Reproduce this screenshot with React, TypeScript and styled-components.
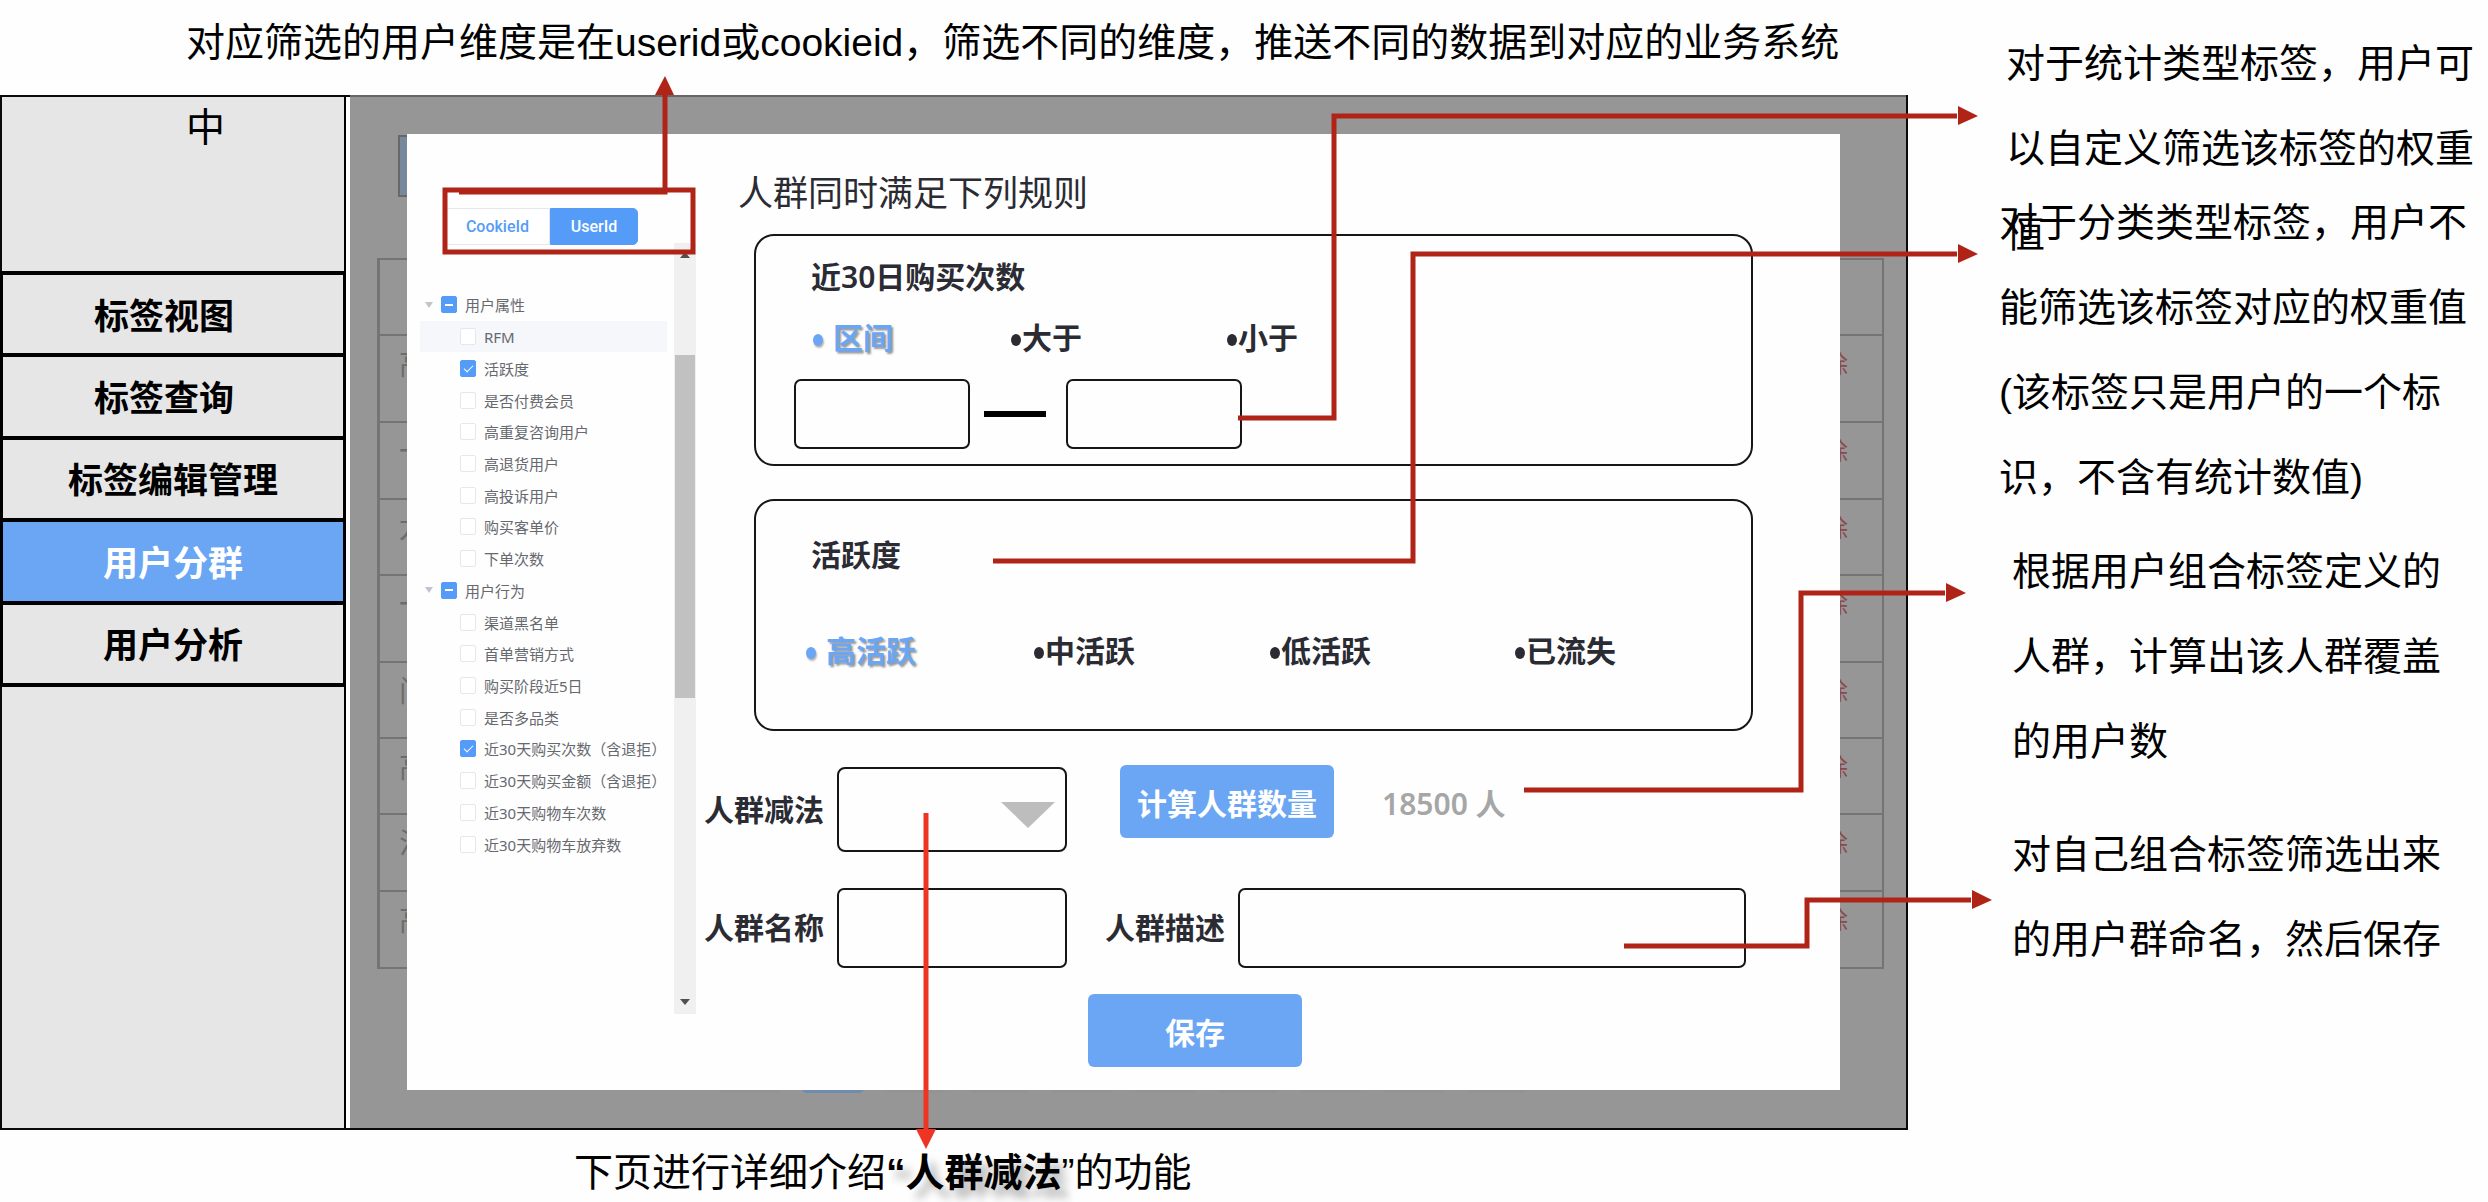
import React, { useState } from "react";
import styled, { createGlobalStyle } from "styled-components";

const noteFont = `"Liberation Sans", "Noto Sans CJK SC", sans-serif`;
const uiFont = `"Noto Sans", "Noto Sans CJK SC", sans-serif`;
const blue = "#6aa6f3";
const treeBlue = "#559cf8";
const ink = "#2b2b33";

const GlobalStyle = createGlobalStyle`
  *, *::before, *::after { box-sizing: border-box; }
  body { margin: 0; background: #fefefe; font-family: ${uiFont}; color: ${ink}; }
  button, input, select { font: inherit; color: inherit; }
`;

/* ---------- page ---------- */

const Page = styled.div`
  position: relative;
  display: grid;
  grid-template-columns: minmax(0, 1fr) 580px;
  overflow: hidden;
`;

const Main = styled.main`
  display: flex;
  flex-direction: column;
`;

const TopCaption = styled.p`
  position: relative;
  z-index: 1;
  height: 95px;
  margin: 0;
  padding: 0 40px 0 186px;
  font: 39px/85px ${noteFont};
  color: #000;
`;

const BottomCaption = styled.p`
  height: 72px;
  margin: 0;
  padding: 5px 0 0 574px;
  font: 39px/75px ${noteFont};
  color: #000;

  strong {
    text-shadow: 8px 9px 8px rgba(0, 0, 0, 0.3);
  }
`;

const Frame = styled.div`
  display: grid;
  grid-template-columns: 344px minmax(0, 1fr);
  gap: 4px;
  border: 2px solid #0a0a0a;
  background: #fff;
`;

/* ---------- sidebar ---------- */

const Sidebar = styled.nav`
  padding-top: 174px;
  background: #e6e6e6;
  border-right: 2px solid #000;
`;

const Menu = styled.ul`
  display: grid;
  grid-auto-rows: 1fr;
  gap: 4px;
  height: 416px;
  margin: 0 -2px;
  padding: 4px 3px;
  list-style: none;
  background: #000;
`;

const MenuLink = styled.a<{ $active?: boolean; $short?: boolean }>`
  display: flex;
  align-items: center;
  justify-content: center;
  height: 100%;
  padding: 0 ${(p) => (p.$short ? 18 : 0)}px 2px 0;
  background: ${(p) => (p.$active ? blue : "#e6e6e6")};
  color: ${(p) => (p.$active ? "#fff" : "#000")};
  font-size: 35px;
  font-weight: 600;
  text-decoration: none;
`;

/* ---------- dimmed page behind the dialog ---------- */

const Stage = styled.div`
  display: grid;
  margin-top: -2px;
  border-top: 2px solid #666;
  background: #969696;
`;

const Backdrop = styled.div`
  grid-area: 1 / 1;
  display: flex;
  flex-direction: column;
  padding: 38px 22px 0 27px;
`;

const BackButton = styled.div`
  width: 120px;
  height: 62px;
  margin: 0 0 61px 21px;
  border: 2px solid #686868;
  background: #76899c;
`;

const BackTable = styled.table`
  width: 100%;
  border-collapse: collapse;
  color: #6c6c6c;

  td {
    border: 2px solid #747474;
    border-left-width: 3px;
    padding: 8px 34px 0 19px;
    vertical-align: top;
    font-size: 29px;
    line-height: 40px;
  }
  td:last-child {
    border-left: 0;
    text-align: right;
    color: #8c4848;
    font-size: 24px;
  }
`;

const BackRow = styled.tr<{ $height: number }>`
  height: ${(p) => p.$height}px;
`;

const Pager = styled.div`
  display: flex;
  gap: 21px;
  margin: 88px 0 0 342px;
`;

const PagerItem = styled.span<{ $on?: boolean }>`
  width: 62px;
  height: 36px;
  border-radius: 5px;
  background: ${(p) => (p.$on ? "#6f8bad" : "#939393")};
`;

/* ---------- dialog ---------- */

const Dialog = styled.section`
  grid-area: 1 / 1;
  z-index: 1;
  display: grid;
  grid-template-columns: 289px minmax(0, 1fr);
  margin: 37px 66px 38px 57px;
  background: #fefefe;
`;

const TreePanel = styled.aside`
  display: grid;
  grid-template-columns: 267px 22px;
  padding-top: 74px;
`;

const Segmented = styled.div`
  display: flex;
  margin: 0 0 44px 38px;
`;

const Segment = styled.button<{ $on?: boolean }>`
  width: ${(p) => (p.$on ? 88 : 105)}px;
  height: 37px;
  padding: 0;
  border: 1px solid ${(p) => (p.$on ? treeBlue : "#e4e7ed")};
  border-radius: ${(p) => (p.$on ? "0 5px 5px 0" : "5px 0 0 5px")};
  background: ${(p) => (p.$on ? treeBlue : "#fff")};
  color: ${(p) => (p.$on ? "#fff" : treeBlue)};
  font-family: Roboto, sans-serif;
  font-size: 16px;
  font-weight: 500;
`;

const Tree = styled.ul`
  display: grid;
  grid-auto-rows: 1fr;
  height: 571px;
  margin: 0 0 0 13px;
  padding: 0;
  list-style: none;
`;

const TreeRow = styled.label<{ $group?: boolean; $hover?: boolean }>`
  display: flex;
  align-items: center;
  gap: 8px;
  width: 247px;
  height: 100%;
  padding-left: ${(p) => (p.$group ? 5 : 40)}px;
  background: ${(p) => (p.$hover ? "#f5f7fb" : "transparent")};
  color: #66696e;
  font-size: 15px;
  white-space: nowrap;
`;

const Caret = styled.svg`
  width: 8px;
  height: 8px;
  fill: #c0c4cc;
`;

const Tick = styled.input<{ $partial?: boolean }>`
  display: grid;
  place-items: center;
  flex: none;
  appearance: none;
  width: 16px;
  height: 17px;
  margin: 0;
  border: 1px solid #e4e7ed;
  border-radius: 2px;
  background: #fff;

  &:checked {
    border-color: ${treeBlue};
    background: ${treeBlue};
  }
  &:checked::after {
    content: "";
    ${(p) =>
      p.$partial
        ? "width: 8px; height: 2px; background: #fff;"
        : "width: 5px; height: 9px; margin-top: -2px; border: solid #fff; border-width: 0 1px 1px 0; transform: rotate(45deg);"}
  }
`;

const ScrollTrack = styled.div`
  display: flex;
  flex-direction: column;
  align-items: center;
  height: 771px;
  margin-top: 35px;
  padding: 8px 0;
  background: #f0f0f0;
`;

const ScrollThumb = styled.div`
  width: 20px;
  height: 343px;
  margin: 96px 0 auto;
  background: #c1c1c1;
`;

const ScrollArrow = styled.svg`
  width: 10px;
  height: 8px;
  fill: #505050;
`;

const Form = styled.form`
  padding: 34px 0 23px 8px;
`;

const Title = styled.h1`
  margin: 0 0 16px 34px;
  font-size: 35px;
  font-weight: 400;
  line-height: 50px;
`;

const Card = styled.fieldset<{ $roomy?: boolean }>`
  min-width: 0;
  height: 232px;
  margin: 0 87px 33px 50px;
  padding: ${(p) => (p.$roomy ? 32 : 19)}px 38px 0;
  border: 2px solid #161616;
  border-radius: 20px;
`;

const CardTitle = styled.h2`
  margin: 0;
  padding-left: 17px;
  font-size: 30px;
  font-weight: 600;
  line-height: 44px;
`;

const Options = styled.div<{ $columns: string; $roomy?: boolean }>`
  display: grid;
  grid-template-columns: ${(p) => p.$columns};
  margin-top: ${(p) => (p.$roomy ? 54 : 19)}px;
  padding-left: ${(p) => (p.$roomy ? 12 : 19)}px;
`;

const Option = styled.label<{ $on?: boolean }>`
  display: flex;
  align-items: center;
  gap: ${(p) => (p.$on ? 10 : 1)}px;
  color: ${(p) => (p.$on ? blue : ink)};
  font-size: 30px;
  font-weight: 600;
  line-height: 40px;
  text-shadow: ${(p) => (p.$on ? "2px 2px 2px rgba(0, 0, 0, 0.4)" : "none")};
`;

const Dot = styled.input`
  appearance: none;
  width: 10px;
  height: 12px;
  margin: 4px 0 0;
  border-radius: 50%;
  background: ${ink};

  &:checked {
    background: ${blue};
    box-shadow: 1px 2px 2px rgba(0, 0, 0, 0.3);
  }
`;

const Range = styled.div`
  display: flex;
  align-items: center;
  gap: 14px;
  margin-top: 21px;
`;

const Dash = styled.span`
  width: 62px;
  height: 6px;
  margin-right: 6px;
  background: #000;
`;

const TextBox = styled.input<{ $size: "range" | "name" | "wide" }>`
  flex: ${(p) => (p.$size === "wide" ? "1" : "none")};
  width: ${(p) => (p.$size === "range" ? 176 : 230)}px;
  height: ${(p) => (p.$size === "range" ? 70 : 80)}px;
  padding: 0 12px;
  border: 2px solid #161616;
  border-radius: 7px;
  background: #fefefe;
  font-size: 30px;
`;

const Row = styled.div`
  display: flex;
  align-items: center;
  margin: 36px 94px 0 0;
`;

const FieldLabel = styled.label`
  margin-right: 13px;
  padding-bottom: 4px;
  font-size: 30px;
  font-weight: 600;
  white-space: nowrap;

  input + & {
    margin-left: 38px;
  }
`;

const SelectWrap = styled.span`
  position: relative;
  display: flex;
  width: 230px;
  height: 85px;
`;

const Select = styled.select`
  appearance: none;
  width: 100%;
  padding: 0 70px 0 12px;
  border: 2px solid #161616;
  border-radius: 8px;
  background: #fefefe;
  font-size: 30px;
`;

const SelectArrow = styled.svg`
  position: absolute;
  right: 12px;
  top: 35px;
  width: 54px;
  height: 26px;
  fill: #bdbdbd;
  pointer-events: none;
`;

const CountGroup = styled.div`
  display: flex;
  align-items: center;
  align-self: flex-start;
  gap: 48px;
  margin: -2px 0 0 53px;
`;

const Primary = styled.button`
  width: 214px;
  height: 73px;
  padding: 0;
  border: 0;
  border-radius: 6px;
  background: ${blue};
  color: #fff;
  font-size: 30px;
  font-weight: 600;
`;

const Count = styled.output`
  color: #a6a6a6;
  font-size: 30px;
  font-weight: 600;
`;

const SaveRow = styled.div`
  display: flex;
  margin: 26px 0 0 384px;
`;

/* ---------- notes ---------- */

const Notes = styled.aside`
  display: flex;
  flex-direction: column;
  padding: 21px 0 0 91px;
`;

const Note = styled.p<{ $width: number; $before?: number; $indent?: number }>`
  width: ${(p) => p.$width}px;
  margin: ${(p) => p.$before ?? 0}px 0 0 ${(p) => p.$indent ?? 0}px;
  font: 39px/85px ${noteFont};
  color: #000;
`;

const Arrows = styled.svg`
  position: absolute;
  inset: 0;
  z-index: 2;
  width: 100%;
  height: 100%;
  pointer-events: none;
`;

/* ---------- data ---------- */

const menu = [
  { label: "标签视图", short: true },
  { label: "标签查询", short: true },
  { label: "标签编辑管理" },
  { label: "用户分群", active: true },
  { label: "用户分析" },
];

const backRows = [
  { text: "", height: 76 },
  { text: "高", height: 87 },
  { text: "一", height: 77 },
  { text: "龙", height: 76 },
  { text: "一", height: 87 },
  { text: "问", height: 76 },
  { text: "高", height: 76 },
  { text: "沙", height: 77 },
  { text: "高", height: 77 },
];

const tree = [
  { label: "用户属性", group: true, on: true },
  { label: "RFM", hover: true },
  { label: "活跃度", on: true },
  { label: "是否付费会员" },
  { label: "高重复咨询用户" },
  { label: "高退货用户" },
  { label: "高投诉用户" },
  { label: "购买客单价" },
  { label: "下单次数" },
  { label: "用户行为", group: true, on: true },
  { label: "渠道黑名单" },
  { label: "首单营销方式" },
  { label: "购买阶段近5日" },
  { label: "是否多品类" },
  { label: "近30天购买次数（含退拒）", on: true },
  { label: "近30天购买金额（含退拒）" },
  { label: "近30天购物车次数" },
  { label: "近30天购物车放弃数" },
];

const arrows = [
  { line: "M459 192H665V95", head: "M655 95L665 76L674 95Z" },
  { line: "M1238 418H1334V116H1957", head: "M1958 106L1978 116L1958 125Z" },
  { line: "M993 561H1413V254H1957", head: "M1958 244L1978 254L1958 263Z" },
  { line: "M1524 790H1801V593H1945", head: "M1946 583L1966 593L1946 602Z" },
  { line: "M1624 946H1807V900H1971", head: "M1972 890L1992 900L1972 909Z" },
  { line: "M926 813V1129", head: "M916 1129H936L926 1149Z", bright: true },
];

function RadioSet({ name, items, columns, roomy }: { name: string; items: string[]; columns: string; roomy?: boolean }) {
  const [value, setValue] = useState(items[0]);
  return (
    <Options $columns={columns} $roomy={roomy}>
      {items.map((item) => (
        <Option key={item} $on={item === value}>
          <Dot type="radio" name={name} checked={item === value} onChange={() => setValue(item)} />
          {item}
        </Option>
      ))}
    </Options>
  );
}

export default function App() {
  return (
    <>
      <GlobalStyle />
      <Page>
        <Main>
          <TopCaption>
            对应筛选的用户维度是在userid或cookieid，筛选不同的维度，推送不同的数据到对应的业务系统中
          </TopCaption>
          <Frame>
            <Sidebar>
              <Menu>
                {menu.map((m) => (
                  <li key={m.label}>
                    <MenuLink href="#" $active={m.active} $short={m.short}>
                      {m.label}
                    </MenuLink>
                  </li>
                ))}
              </Menu>
            </Sidebar>
            <Stage>
              <Backdrop aria-hidden="true">
                <BackButton />
                <BackTable>
                  <tbody>
                    {backRows.map((row, i) => (
                      <BackRow key={i} $height={row.height}>
                        <td>{row.text}</td>
                        <td>{row.text && "删除"}</td>
                      </BackRow>
                    ))}
                  </tbody>
                </BackTable>
                <Pager>
                  {Array.from({ length: 10 }, (_, i) => (
                    <PagerItem key={i} $on={i === 1} />
                  ))}
                </Pager>
              </Backdrop>
              <Dialog role="dialog" aria-label="用户分群">
                <TreePanel>
                  <div>
                    <Segmented>
                      <Segment type="button" aria-pressed={false}>
                        CookieId
                      </Segment>
                      <Segment type="button" aria-pressed={true} $on>
                        UserId
                      </Segment>
                    </Segmented>
                    <Tree>
                      {tree.map((n) => (
                        <li key={n.label}>
                          <TreeRow $group={n.group} $hover={n.hover}>
                            {n.group && (
                              <Caret viewBox="0 0 8 8">
                                <path d="M0 1H8L4 7Z" />
                              </Caret>
                            )}
                            <Tick type="checkbox" defaultChecked={n.on} $partial={n.group} />
                            {n.label}
                          </TreeRow>
                        </li>
                      ))}
                    </Tree>
                  </div>
                  <ScrollTrack>
                    <ScrollArrow viewBox="0 0 10 8">
                      <path d="M0 7H10L5 1Z" />
                    </ScrollArrow>
                    <ScrollThumb />
                    <ScrollArrow viewBox="0 0 10 8">
                      <path d="M0 1H10L5 7Z" />
                    </ScrollArrow>
                  </ScrollTrack>
                </TreePanel>
                <Form onSubmit={(e) => e.preventDefault()}>
                  <Title>人群同时满足下列规则</Title>
                  <Card>
                    <CardTitle>近30日购买次数</CardTitle>
                    <RadioSet name="orders" items={["区间", "大于", "小于"]} columns="198px 216px auto" />
                    <Range>
                      <TextBox $size="range" aria-label="最小值" />
                      <Dash />
                      <TextBox $size="range" aria-label="最大值" />
                    </Range>
                  </Card>
                  <Card $roomy>
                    <CardTitle>活跃度</CardTitle>
                    <RadioSet
                      roomy
                      name="activity"
                      items={["高活跃", "中活跃", "低活跃", "已流失"]}
                      columns="228px 236px 245px auto"
                    />
                  </Card>
                  <Row>
                    <FieldLabel htmlFor="subtract">人群减法</FieldLabel>
                    <SelectWrap>
                      <Select id="subtract" />
                      <SelectArrow viewBox="0 0 54 26">
                        <path d="M0 0H54L27 26Z" />
                      </SelectArrow>
                    </SelectWrap>
                    <CountGroup>
                      <Primary type="button">计算人群数量</Primary>
                      <Count>18500 人</Count>
                    </CountGroup>
                  </Row>
                  <Row>
                    <FieldLabel htmlFor="name">人群名称</FieldLabel>
                    <TextBox id="name" $size="name" />
                    <FieldLabel htmlFor="desc">人群描述</FieldLabel>
                    <TextBox id="desc" $size="wide" />
                  </Row>
                  <SaveRow>
                    <Primary type="submit">保存</Primary>
                  </SaveRow>
                </Form>
              </Dialog>
            </Stage>
          </Frame>
          <BottomCaption>
            下页进行详细介绍<strong>“人群减法</strong>”的功能
          </BottomCaption>
        </Main>
        <Notes>
          <Note $width={480} $indent={7}>
            对于统计类型标签，用户可以自定义筛选该标签的权重值
          </Note>
          <Note $width={480} $before={-96}>
            对于分类类型标签，用户不能筛选该标签对应的权重值(该标签只是用户的一个标识，不含有统计数值)
          </Note>
          <Note $width={440} $before={9} $indent={13}>
            根据用户组合标签定义的人群，计算出该人群覆盖的用户数
          </Note>
          <Note $width={440} $before={28} $indent={13}>
            对自己组合标签筛选出来的用户群命名，然后保存
          </Note>
        </Notes>
        <Arrows viewBox="0 0 2488 1202" preserveAspectRatio="none" aria-hidden="true">
          <rect x="445" y="190" width="248" height="62" fill="none" stroke="#b02418" strokeWidth="5" />
          {arrows.map((a) => (
            <g key={a.line} fill={a.bright ? "#ee3524" : "#b02418"} stroke={a.bright ? "#ee3524" : "#b02418"}>
              <path d={a.line} fill="none" strokeWidth="5" />
              <path d={a.head} stroke="none" />
            </g>
          ))}
        </Arrows>
      </Page>
    </>
  );
}
